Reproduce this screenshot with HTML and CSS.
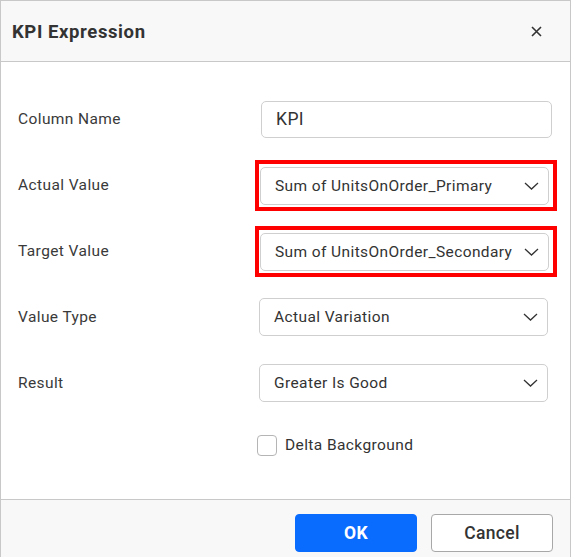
FILE: index.html
```html
<!DOCTYPE html>
<html lang="en">
<head>
    <meta charset="UTF-8">
    <meta name="viewport" content="width=device-width, initial-scale=1.0">
    <title>KPI Expression</title>
    <link rel="stylesheet" href="styles.css">
</head>
<body>

    <div class="dialog">
        <div class="dialog-header">
            <span class="dialog-title">KPI Expression</span>
            <button class="close-btn" title="Close">
                <svg width="11" height="11" viewBox="0 0 11 11">
                    <path d="M1 1 L10 10 M10 1 L1 10" stroke="#333" stroke-width="1.6" fill="none"/>
                </svg>
            </button>
        </div>

        <div class="dialog-body">
            <div class="field">
                <label class="field-label">Column Name</label>
                <input type="text" class="text-input" value="KPI">
            </div>

            <div class="field">
                <label class="field-label">Actual Value</label>
                <div class="highlight">
                    <div class="dropdown">
                        <span>Sum of UnitsOnOrder_Primary</span>
                        <svg class="chevron" width="15" height="8" viewBox="0 0 15 8"><path d="M1 1 L7.5 7 L14 1" /></svg>
                    </div>
                </div>
            </div>

            <div class="field">
                <label class="field-label">Target Value</label>
                <div class="highlight">
                    <div class="dropdown">
                        <span>Sum of UnitsOnOrder_Secondary</span>
                        <svg class="chevron" width="15" height="8" viewBox="0 0 15 8"><path d="M1 1 L7.5 7 L14 1" /></svg>
                    </div>
                </div>
            </div>

            <div class="field">
                <label class="field-label">Value Type</label>
                <div class="dropdown">
                    <span>Actual Variation</span>
                    <svg class="chevron" width="15" height="8" viewBox="0 0 15 8"><path d="M1 1 L7.5 7 L14 1" /></svg>
                </div>
            </div>

            <div class="field">
                <label class="field-label">Result</label>
                <div class="dropdown">
                    <span>Greater Is Good</span>
                    <svg class="chevron" width="15" height="8" viewBox="0 0 15 8"><path d="M1 1 L7.5 7 L14 1" /></svg>
                </div>
            </div>

            <div class="field check-row">
                <span class="field-label"></span>
                <label class="checkbox">
                    <span class="check-box"></span>
                    Delta Background
                </label>
            </div>
        </div>

        <div class="dialog-footer">
            <button class="btn btn-primary">OK</button>
            <button class="btn btn-default">Cancel</button>
        </div>
    </div>

</body>
</html>
```

FILE: styles.css
```css
body {
    margin: 0;
    font-family: Roboto, "Liberation Sans", Arial, sans-serif;
    letter-spacing: 0.4px;
    color: #333;
    background: #fff;
}
.dialog {
    width: 571px;
    height: 557px;
    box-sizing: border-box;
    border: 1px solid #c8c8c8;
    border-bottom: none;
    display: flex;
    flex-direction: column;
}
.dialog-header {
    height: 60px;
    flex-shrink: 0;
    background-color: #f8f8f8;
    border-bottom: 1px solid #c8c8c8;
    display: flex;
    align-items: center;
    justify-content: space-between;
    padding: 0 28px 0 11px;
}
.dialog-title {
    font-size: 18.5px;
    font-weight: 700;
    letter-spacing: 0.6px;
    color: #333;
    padding-top: 2px;
}
.close-btn {
    border: none;
    background: none;
    padding: 0;
    width: 11px;
    height: 11px;
    cursor: pointer;
    display: flex;
}
.dialog-body {
    flex: 1;
    padding: 24px 0 0 17px;
}
.field {
    display: flex;
    align-items: center;
    height: 66px;
}
.field-label {
    width: 241px;
    font-size: 15.5px;
    color: #3a3a3a;
}
.text-input {
    margin-left: 2px;
    width: 291px;
    height: 37px;
    box-sizing: border-box;
    border: 1px solid #cfcfcf;
    border-radius: 5px;
    padding: 0 14px;
    font-family: inherit;
    font-size: 17.5px;
    letter-spacing: 0.4px;
    color: #333;
    outline: none;
}
.dropdown {
    width: 289px;
    height: 38px;
    box-sizing: border-box;
    border: 1px solid #cfcfcf;
    border-radius: 5px;
    display: flex;
    align-items: center;
    justify-content: space-between;
    padding: 0 9px 0 14px;
    font-size: 15.5px;
    color: #333;
}
.chevron path {
    fill: none;
    stroke: #333;
    stroke-width: 1.3;
}
.highlight {
    margin-left: -4px;
    width: 302px;
    height: 51px;
    box-sizing: border-box;
    border: 4px solid #ff0000;
    padding: 3px 0 0 1px;
}
.check-row {
    height: 58px;
}
.checkbox {
    display: flex;
    align-items: center;
    gap: 8px;
    font-size: 15.5px;
    color: #333;
    margin-left: -2px;
}
.check-box {
    width: 18px;
    height: 19px;
    border: 1px solid #b5b5b5;
    border-radius: 4px;
    background: #fff;
}
.dialog-footer {
    height: 58px;
    flex-shrink: 0;
    box-sizing: border-box;
    background-color: #f8f8f8;
    border-top: 1px solid #c8c8c8;
    display: flex;
    justify-content: flex-end;
    align-items: flex-start;
    gap: 14px;
    padding: 14px 17px 0 0;
}
.btn {
    width: 122px;
    height: 38px;
    border-radius: 4px;
    font-family: inherit;
    font-size: 17.5px;
    letter-spacing: 0.3px;
    cursor: pointer;
}
.btn-primary {
    background-color: #0a6cff;
    border: 1px solid #0a6cff;
    color: #fff;
    font-weight: 700;
}
.btn-default {
    background-color: #fff;
    border: 1px solid #a8a8a8;
    color: #333;
    font-weight: 500;
}
```
